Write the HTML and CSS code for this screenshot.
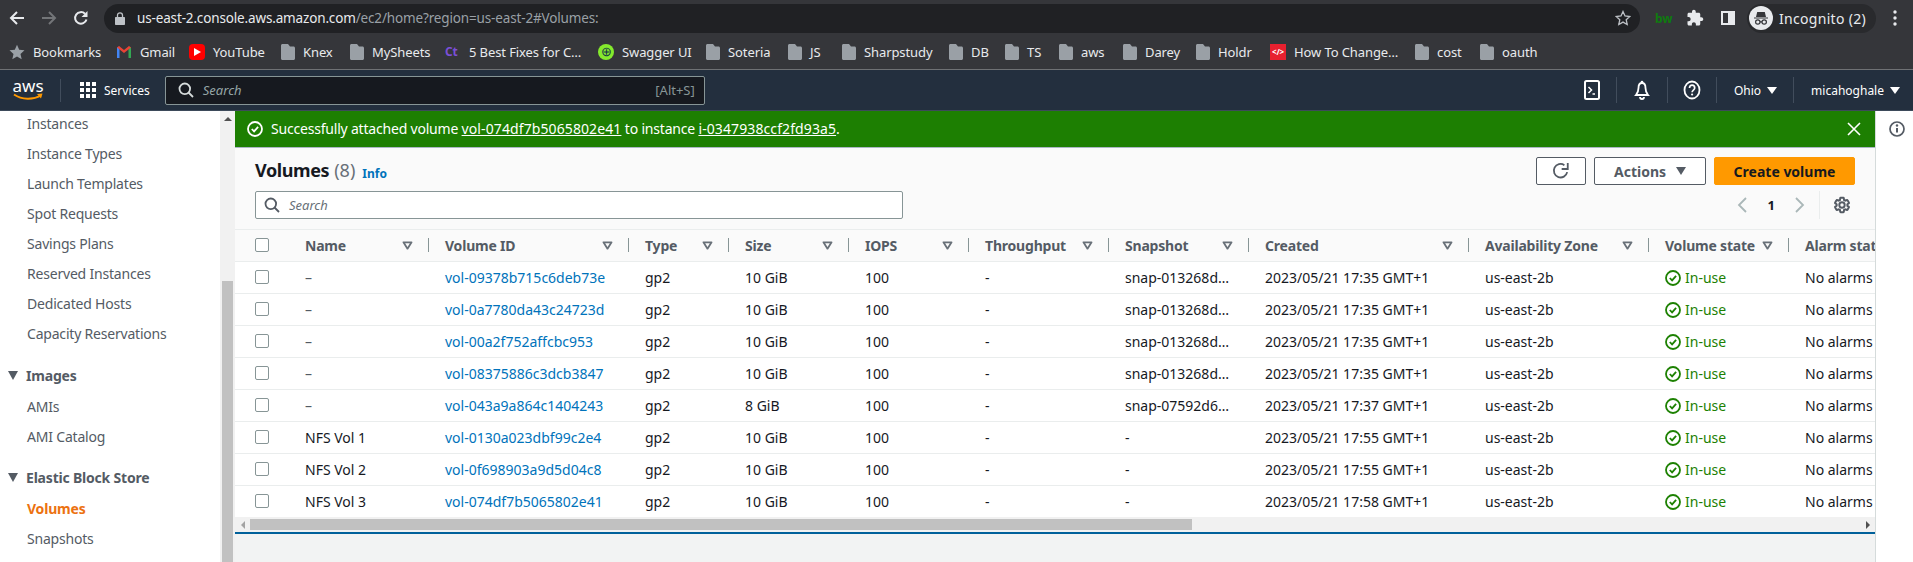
FILE: index.html
```html
<!DOCTYPE html>
<html lang="en">
<head>
  <meta charset="UTF-8">
  <title>Volumes | EC2 Management Console</title>
  <link rel="stylesheet" href="styles.css">
</head>
<body>
  <svg class="defs" width="0" height="0">
    <symbol id="folder" viewBox="0 0 14 16"><path d="M0 1.500C0 .7.7 0 1.500 0H7l2 2.500h3.500c.8 0 1.500.7 1.500 1.500v10.500c0 .8-.7 1.500-1.500 1.500h-11C.7 16 0 15.300 0 14.500z" fill="#9aa0a6"/></symbol>
    <symbol id="sort" viewBox="0 0 12 10"><path d="M1.500 1.500h9L6 8.500z" fill="none" stroke="#687078" stroke-width="2" stroke-linejoin="round"/></symbol>
    <symbol id="ok" viewBox="0 0 16 16"><circle cx="8" cy="8" r="7" fill="none" stroke="currentColor" stroke-width="1.800"/><path d="M4.800 8l2.300 2.400 4-4.600" fill="none" stroke="currentColor" stroke-width="1.800"/></symbol>
  </svg>

  <div class="browser-bar">
    <svg class="tb-icon back" width="16" height="16" viewBox="0 0 16 16"><path d="M15 8H2M8 2L2 8l6 6" fill="none" stroke="#e8eaed" stroke-width="2"/></svg>
    <svg class="tb-icon forward" width="16" height="16" viewBox="0 0 16 16"><path d="M1 8h13M8 2l6 6-6 6" fill="none" stroke="#737578" stroke-width="2"/></svg>
    <svg class="tb-icon reload" width="16" height="16" viewBox="0 0 16 16"><path d="M13.500 9.500A5.800 5.800 0 1 1 12 3.800" fill="none" stroke="#e8eaed" stroke-width="2"/><path d="M14.500 1v6h-6z" fill="#e8eaed"/></svg>
    <div class="omnibox">
      <svg class="lock" width="10" height="13" viewBox="0 0 10 13"><path d="M1 5h8c.6 0 1 .4 1 1v6c0 .6-.4 1-1 1H1c-.6 0-1-.4-1-1V6c0-.6.4-1 1-1z" fill="#bdc1c6"/><path d="M2.500 5V3.300a2.500 2.500 0 0 1 5 0V5" fill="none" stroke="#bdc1c6" stroke-width="1.300"/></svg>
      <span class="url">us-east-2.console.aws.amazon.com<span class="url-rest">/ec2/home?region=us-east-2#Volumes:</span></span>
      <svg class="star" width="16" height="16" viewBox="0 0 16 16"><path d="M8 1.500l2 4.500 4.800.5-3.600 3.200 1 4.800L8 12.100l-4.200 2.400 1-4.800L1.200 6.500 6 6z" fill="none" stroke="#bdc1c6" stroke-width="1.300"/></svg>
    </div>
    <span class="bw">bw</span>
    <svg class="puzzle" width="18" height="18" viewBox="0 0 24 24"><path d="M20.500 11H19V7c0-1.100-.9-2-2-2h-4V3.500C13 2.120 11.880 1 10.500 1S8 2.120 8 3.500V5H4c-1.100 0-1.990.9-1.990 2v3.800H3.500c1.490 0 2.700 1.210 2.700 2.700s-1.210 2.700-2.700 2.700H2V20c0 1.100.9 2 2 2h3.800v-1.500c0-1.490 1.210-2.700 2.700-2.700 1.490 0 2.700 1.210 2.700 2.700V22H17c1.100 0 2-.9 2-2v-4h1.500c1.380 0 2.500-1.120 2.500-2.500S21.880 11 20.500 11z" fill="#e8eaed"/></svg>
    <svg class="panel-toggle" width="14" height="14" viewBox="0 0 14 14"><path d="M0 0h14v14H0z" fill="#e8eaed"/><path d="M2 2h5v10H2z" fill="#35363a"/></svg>
    <div class="profile">
      <span class="avatar">
        <svg width="18" height="18" viewBox="0 0 18 18"><path d="M2 8.500h14v1H2zM4 8l1.200-5h7.600L14 8z" fill="#35363a"/><circle cx="5.800" cy="13" r="2.200" fill="none" stroke="#35363a" stroke-width="1.200"/><circle cx="12.200" cy="13" r="2.200" fill="none" stroke="#35363a" stroke-width="1.200"/><path d="M8 12.800h2" stroke="#35363a" stroke-width="1.200"/></svg>
      </span>
      <span class="profile-name">Incognito (2)</span>
    </div>
    <svg class="dots" width="4" height="16" viewBox="0 0 4 16"><circle cx="2" cy="2" r="1.700" fill="#e8eaed"/><circle cx="2" cy="8" r="1.700" fill="#e8eaed"/><circle cx="2" cy="14" r="1.700" fill="#e8eaed"/></svg>
  </div>

  <div class="bookmarks">
    <a class="bm"><svg class="bm-icon bm-wide" viewBox="0 0 16 16"><path d="M8 .8l2.200 5 5.300.5-4 3.600 1.200 5.300L8 12.400l-4.700 2.800 1.200-5.300-4-3.600 5.300-.5z" fill="#9aa0a6"/></svg>Bookmarks</a>
    <a class="bm"><svg class="bm-icon bm-wide" viewBox="0 0 16 16"><path d="M1 14V3.500l2.500-1V14z" fill="#4285f4"/><path d="M15 14V3.500l-2.500-1V14z" fill="#34a853"/><path d="M1 3.500L3 2l5 4 5-4 2 1.500-7 5.500z" fill="#ea4335"/></svg>Gmail</a>
    <a class="bm"><span class="yt"><svg width="8" height="8" viewBox="0 0 8 8"><path d="M1 0l7 4-7 4z" fill="#fff"/></svg></span>YouTube</a>
    <a class="bm"><svg class="bm-icon"><use href="#folder"/></svg>Knex</a>
    <a class="bm"><svg class="bm-icon"><use href="#folder"/></svg>MySheets</a>
    <a class="bm"><span class="ct">Ct</span>5 Best Fixes for C…</a>
    <a class="bm"><span class="swagger">⊕</span>Swagger UI</a>
    <a class="bm"><svg class="bm-icon"><use href="#folder"/></svg>Soteria</a>
    <a class="bm"><svg class="bm-icon"><use href="#folder"/></svg>JS</a>
    <a class="bm"><svg class="bm-icon"><use href="#folder"/></svg>Sharpstudy</a>
    <a class="bm"><svg class="bm-icon"><use href="#folder"/></svg>DB</a>
    <a class="bm"><svg class="bm-icon"><use href="#folder"/></svg>TS</a>
    <a class="bm"><svg class="bm-icon"><use href="#folder"/></svg>aws</a>
    <a class="bm"><svg class="bm-icon"><use href="#folder"/></svg>Darey</a>
    <a class="bm"><svg class="bm-icon"><use href="#folder"/></svg>Holdr</a>
    <a class="bm"><span class="code-icon">&lt;/&gt;</span>How To Change…</a>
    <a class="bm"><svg class="bm-icon"><use href="#folder"/></svg>cost</a>
    <a class="bm"><svg class="bm-icon"><use href="#folder"/></svg>oauth</a>
  </div>

  <nav class="topnav">
    <div class="logo">
      <span class="logo-text">aws</span>
      <svg width="30" height="9" viewBox="0 0 30 9"><path d="M1 1.500C9 7 20 7 28 2.500" fill="none" stroke="#ff9900" stroke-width="2"/><path d="M24 1l5.500-.5-1.500 5" fill="#ff9900"/></svg>
    </div>
    <svg class="grid-icon" width="16" height="16" viewBox="0 0 16 16"><path d="M0 0h4v4H0zM6 0h4v4H6zM12 0h4v4h-4zM0 6h4v4H0zM6 6h4v4H6zM12 6h4v4h-4zM0 12h4v4H0zM6 12h4v4H6zM12 12h4v4h-4z" fill="#fff"/></svg>
    <span class="services">Services</span>
    <div class="nav-search">
      <svg width="16" height="16" viewBox="0 0 16 16"><circle cx="6.800" cy="6.800" r="5.300" fill="none" stroke="#d5dbdb" stroke-width="1.800"/><path d="M10.500 10.500l4.500 4.500" stroke="#d5dbdb" stroke-width="1.800"/></svg>
      <span class="nav-placeholder">Search</span>
      <span class="nav-shortcut">[Alt+S]</span>
    </div>
    <div class="nav-right">
      <span class="nav-cell cell-shell">
        <svg width="16" height="20" viewBox="0 0 16 20"><rect x="1" y="1" width="14" height="18" rx="1.500" fill="none" stroke="#fff" stroke-width="2"/><path d="M4.500 7l3 3-3 3M8.500 14h2.500" fill="none" stroke="#fff" stroke-width="1.500"/></svg>
      </span>
      <span class="nav-cell cell-bell">
        <svg width="18" height="20" viewBox="0 0 18 20"><circle cx="9" cy="2" r="1.300" fill="#fff"/><path d="M9 3c2.500 0 3.500 2.200 3.500 5 0 2.800.8 5 2.500 7H3c1.700-2 2.500-4.200 2.500-7 0-2.800 1-5 3.500-5zM7 17a2 2 0 0 0 4 0" fill="none" stroke="#fff" stroke-width="1.800"/></svg>
      </span>
      <span class="nav-cell cell-help">
        <svg width="18" height="20" viewBox="0 0 18 20"><ellipse cx="9" cy="10" rx="7.500" ry="8.500" fill="none" stroke="#fff" stroke-width="1.800"/><path d="M6.500 8c0-1.800 1-2.800 2.600-2.800S11.700 6.300 11.700 8c0 2-2.600 2.200-2.600 4.300" fill="none" stroke="#fff" stroke-width="1.700"/><circle cx="9.100" cy="14.500" r="1.100" fill="#fff"/></svg>
      </span>
      <span class="nav-cell cell-region">Ohio<i class="caret"></i></span>
      <span class="nav-cell cell-user">micahoghale<i class="caret"></i></span>
    </div>
  </nav>

  <div class="layout">
    <aside class="sidebar">
      <ul class="side-list">
        <li>Instances</li>
        <li>Instance Types</li>
        <li>Launch Templates</li>
        <li>Spot Requests</li>
        <li>Savings Plans</li>
        <li>Reserved Instances</li>
        <li>Dedicated Hosts</li>
        <li>Capacity Reservations</li>
        <li class="side-group first-group"><i class="side-caret"></i>Images</li>
        <li>AMIs</li>
        <li>AMI Catalog</li>
        <li class="side-group"><i class="side-caret"></i>Elastic Block Store</li>
        <li class="active">Volumes</li>
        <li>Snapshots</li>
      </ul>
    </aside>
    <div class="side-scroll">
      <i class="arrow-up"></i>
      <div class="side-thumb"></div>
    </div>

    <main class="main">
      <div class="flash">
        <svg class="flash-ok"><use href="#ok"/></svg>
        <span class="flash-text">Successfully attached volume <u>vol-074df7b5065802e41</u> to instance <u>i-0347938ccf2fd93a5</u>.</span>
        <svg class="flash-close" width="14" height="14" viewBox="0 0 14 14"><path d="M1 1l12 12M13 1L1 13" stroke="#fff" stroke-width="1.600"/></svg>
      </div>

      <div class="panel-head">
        <div class="head-left">
          <div class="title-row">
            <h1>Volumes</h1><span class="count">(8)</span><a class="info">Info</a>
          </div>
          <div class="filter">
            <svg width="16" height="16" viewBox="0 0 16 16"><circle cx="6.800" cy="6.800" r="5.300" fill="none" stroke="#545b64" stroke-width="1.800"/><path d="M10.500 10.500l4.500 4.500" stroke="#545b64" stroke-width="1.800"/></svg>
            <span>Search</span>
          </div>
        </div>
        <div class="head-right">
          <div class="buttons">
            <button class="btn btn-refresh">
              <svg width="18" height="18" viewBox="0 0 16 16"><path d="M13.500 9A6 6 0 1 1 11 2.800" fill="none" stroke="#545b64" stroke-width="1.600"/><path d="M14 .8v5.400H8.600" fill="none" stroke="#545b64" stroke-width="1.600"/></svg>
            </button>
            <button class="btn btn-actions">Actions<i class="btn-caret"></i></button>
            <button class="btn btn-create">Create volume</button>
          </div>
          <div class="pager">
            <svg width="10" height="16" viewBox="0 0 10 16"><path d="M9 1L2 8l7 7" fill="none" stroke="#aab7b8" stroke-width="1.800"/></svg>
            <b class="page-no">1</b>
            <svg width="10" height="16" viewBox="0 0 10 16"><path d="M1 1l7 7-7 7" fill="none" stroke="#aab7b8" stroke-width="1.800"/></svg>
            <span class="pager-cell">
              <svg width="18" height="18" viewBox="0 0 24 24"><path d="M19.140 12.940c.04-.3.06-.61.06-.94 0-.32-.02-.64-.07-.94l2.030-1.580c.18-.14.23-.41.120-.61l-1.920-3.320c-.12-.22-.37-.29-.59-.22l-2.390.96c-.5-.38-1.030-.7-1.620-.94l-.36-2.540c-.04-.24-.24-.41-.48-.41h-3.840c-.24 0-.43.17-.47.41l-.36 2.540c-.59.24-1.130.57-1.620.94l-2.390-.96c-.22-.08-.47 0-.59.22L2.740 8.870c-.12.21-.08.47.12.61l2.030 1.580c-.05.3-.09.63-.09.94s.02.64.07.94l-2.030 1.580c-.18.14-.23.41-.12.61l1.920 3.320c.12.22.37.29.59.22l2.390-.96c.5.38 1.030.7 1.620.94l.36 2.540c.05.24.24.41.48.41h3.840c.24 0 .44-.17.47-.41l.36-2.540c.59-.24 1.130-.56 1.620-.94l2.390.96c.22.08.47 0 .59-.22l1.920-3.320c.12-.22.07-.47-.12-.61l-2.010-1.580zM12 15.600c-1.980 0-3.600-1.620-3.600-3.600s1.620-3.600 3.600-3.600 3.600 1.620 3.600 3.600-1.620 3.600-3.600 3.600z" fill="none" stroke="#545b64" stroke-width="2.600"/></svg>
            </span>
          </div>
        </div>
      </div>

      <div class="table-wrap">
        <table class="vol-table">
          <colgroup>
            <col class="c-check"><col class="c-140"><col class="c-200"><col class="c-100"><col class="c-120"><col class="c-120"><col class="c-140"><col class="c-140"><col class="c-220"><col class="c-180"><col class="c-140"><col class="c-200">
          </colgroup>
          <thead>
            <tr>
              <th class="check-cell"><span class="check"></span></th>
              <th><div class="th-in">Name<svg class="sort"><use href="#sort"/></svg></div></th>
              <th><div class="th-in">Volume ID<svg class="sort"><use href="#sort"/></svg></div></th>
              <th><div class="th-in">Type<svg class="sort"><use href="#sort"/></svg></div></th>
              <th><div class="th-in">Size<svg class="sort"><use href="#sort"/></svg></div></th>
              <th><div class="th-in">IOPS<svg class="sort"><use href="#sort"/></svg></div></th>
              <th><div class="th-in">Throughput<svg class="sort"><use href="#sort"/></svg></div></th>
              <th><div class="th-in">Snapshot<svg class="sort"><use href="#sort"/></svg></div></th>
              <th><div class="th-in">Created<svg class="sort"><use href="#sort"/></svg></div></th>
              <th><div class="th-in">Availability Zone<svg class="sort"><use href="#sort"/></svg></div></th>
              <th><div class="th-in">Volume state<svg class="sort"><use href="#sort"/></svg></div></th>
              <th><div class="th-in">Alarm state<svg class="sort"><use href="#sort"/></svg></div></th>
            </tr>
          </thead>
          <tbody>
            <tr><td class="check-cell"><span class="check"></span></td><td class="muted">–</td><td><a>vol-09378b715c6deb73e</a></td><td>gp2</td><td>10 GiB</td><td>100</td><td>-</td><td>snap-013268d…</td><td>2023/05/21 17:35 GMT+1</td><td>us-east-2b</td><td class="state"><svg class="state-ok"><use href="#ok"/></svg>In-use</td><td>No alarms</td></tr>
            <tr><td class="check-cell"><span class="check"></span></td><td class="muted">–</td><td><a>vol-0a7780da43c24723d</a></td><td>gp2</td><td>10 GiB</td><td>100</td><td>-</td><td>snap-013268d…</td><td>2023/05/21 17:35 GMT+1</td><td>us-east-2b</td><td class="state"><svg class="state-ok"><use href="#ok"/></svg>In-use</td><td>No alarms</td></tr>
            <tr><td class="check-cell"><span class="check"></span></td><td class="muted">–</td><td><a>vol-00a2f752affcbc953</a></td><td>gp2</td><td>10 GiB</td><td>100</td><td>-</td><td>snap-013268d…</td><td>2023/05/21 17:35 GMT+1</td><td>us-east-2b</td><td class="state"><svg class="state-ok"><use href="#ok"/></svg>In-use</td><td>No alarms</td></tr>
            <tr><td class="check-cell"><span class="check"></span></td><td class="muted">–</td><td><a>vol-08375886c3dcb3847</a></td><td>gp2</td><td>10 GiB</td><td>100</td><td>-</td><td>snap-013268d…</td><td>2023/05/21 17:35 GMT+1</td><td>us-east-2b</td><td class="state"><svg class="state-ok"><use href="#ok"/></svg>In-use</td><td>No alarms</td></tr>
            <tr><td class="check-cell"><span class="check"></span></td><td class="muted">–</td><td><a>vol-043a9a864c1404243</a></td><td>gp2</td><td>8 GiB</td><td>100</td><td>-</td><td>snap-07592d6…</td><td>2023/05/21 17:37 GMT+1</td><td>us-east-2b</td><td class="state"><svg class="state-ok"><use href="#ok"/></svg>In-use</td><td>No alarms</td></tr>
            <tr><td class="check-cell"><span class="check"></span></td><td>NFS Vol 1</td><td><a>vol-0130a023dbf99c2e4</a></td><td>gp2</td><td>10 GiB</td><td>100</td><td>-</td><td>-</td><td>2023/05/21 17:55 GMT+1</td><td>us-east-2b</td><td class="state"><svg class="state-ok"><use href="#ok"/></svg>In-use</td><td>No alarms</td></tr>
            <tr><td class="check-cell"><span class="check"></span></td><td>NFS Vol 2</td><td><a>vol-0f698903a9d5d04c8</a></td><td>gp2</td><td>10 GiB</td><td>100</td><td>-</td><td>-</td><td>2023/05/21 17:55 GMT+1</td><td>us-east-2b</td><td class="state"><svg class="state-ok"><use href="#ok"/></svg>In-use</td><td>No alarms</td></tr>
            <tr><td class="check-cell"><span class="check"></span></td><td>NFS Vol 3</td><td><a>vol-074df7b5065802e41</a></td><td>gp2</td><td>10 GiB</td><td>100</td><td>-</td><td>-</td><td>2023/05/21 17:58 GMT+1</td><td>us-east-2b</td><td class="state"><svg class="state-ok"><use href="#ok"/></svg>In-use</td><td>No alarms</td></tr>
          </tbody>
        </table>
      </div>

      <div class="h-scroll">
        <span class="h-arrow"><i class="arrow-left"></i></span>
        <div class="h-thumb"></div>
        <span class="h-arrow h-arrow-end"><i class="arrow-right"></i></span>
      </div>
      <div class="main-foot"></div>
    </main>

    <aside class="rail">
      <svg width="16" height="16" viewBox="0 0 16 16"><circle cx="8" cy="8" r="7" fill="none" stroke="#545b64" stroke-width="1.700"/><path d="M8 7v4.500" stroke="#545b64" stroke-width="2"/><circle cx="8" cy="4.500" r="1.200" fill="#545b64"/></svg>
    </aside>
  </div>
</body>
</html>
```
FILE: styles.css
```css
* {
  box-sizing: border-box;
}

html,
body {
  margin: 0;
  height: 562px;
  overflow: hidden;
}

body {
  font-family: "Noto Sans", "Open Sans", sans-serif;
  font-size: 14px;
  color: #16191f;
  background-color: #fff;
}

.defs {
  display: block;
  height: 0;
}

/* browser chrome */
.browser-bar {
  display: flex;
  align-items: center;
  height: 35px;
  padding-top: 1px;
  background-color: #35363a;
  color: #e8eaed;
}

.tb-icon {
  flex: none;
}

.back {
  margin-left: 9px;
}

.forward {
  margin-left: 16px;
}

.reload {
  margin-left: 16px;
}

.omnibox {
  display: flex;
  align-items: center;
  flex: none;
  width: 1536px;
  height: 29px;
  margin-left: 15px;
  padding: 0 9px 0 11px;
  border-radius: 15px;
  background-color: #202124;
}

.url {
  margin-left: 12px;
  font-size: 13.5px;
  letter-spacing: -.15px;
  color: #e8eaed;
  white-space: nowrap;
}

.url-rest {
  color: #9aa0a6;
}

.star {
  margin-left: auto;
}

.bw {
  width: 16px;
  margin-left: 15px;
  font-size: 12px;
  font-weight: 700;
  color: #0f7a0f;
}

.puzzle {
  margin-left: 15px;
}

.panel-toggle {
  margin-left: 17px;
}

.profile {
  display: flex;
  align-items: center;
  gap: 6px;
  width: 129px;
  height: 29px;
  margin-left: 12px;
  padding-left: 2px;
  border-radius: 15px;
  background-color: #292a2d;
  font-size: 14px;
  white-space: nowrap;
}

.profile-name {
  letter-spacing: .3px;
}

.avatar {
  display: flex;
  align-items: center;
  justify-content: center;
  width: 24px;
  height: 24px;
  border-radius: 50%;
  background-color: #e8eaed;
}

.dots {
  margin-left: 17px;
}

.bookmarks {
  display: grid;
  grid-template-columns: 107px 73px 92px 69px 95px 153px 108px 82px 54px 107px 56px 54px 64px 73px 74px 145px 65px 80px;
  align-items: center;
  height: 35px;
  padding: 0 0 1px 9px;
  border-bottom: 1px solid #6f7174;
  background-color: #35363a;
  color: #e8eaed;
  font-size: 13px;
}

.bm {
  display: flex;
  align-items: center;
  gap: 8px;
  white-space: nowrap;
  letter-spacing: -.1px;
}

.bm-icon {
  width: 14px;
  height: 16px;
  flex: none;
}

.bm-wide {
  width: 16px;
}

.yt {
  display: flex;
  align-items: center;
  justify-content: center;
  width: 16px;
  height: 16px;
  border-radius: 4px;
  background-color: #f00;
}

.ct {
  width: 16px;
  font-size: 12px;
  font-weight: 700;
  color: #7b4fd6;
}

.swagger {
  display: flex;
  align-items: center;
  justify-content: center;
  width: 16px;
  height: 16px;
  border-radius: 50%;
  background-color: #85ea2d;
  color: #173647;
  font-size: 13px;
  line-height: 1;
}

.code-icon {
  display: flex;
  align-items: center;
  justify-content: center;
  width: 16px;
  height: 16px;
  background-color: #e8202f;
  color: #fff;
  font-size: 8px;
  font-weight: 700;
}

/* console nav */
.topnav {
  display: flex;
  align-items: center;
  height: 41px;
  border-bottom: 1px solid #3d4a5a;
  background-color: #232f3e;
  color: #fff;
}

.logo {
  display: flex;
  flex-direction: column;
  align-items: center;
  width: 48px;
  margin-left: 13px;
  padding-right: 17px;
  border-right: 1px solid #414d5c;
  line-height: 14px;
}

.logo-text {
  font-size: 17px;
}

.grid-icon {
  margin-left: 19px;
}

.services {
  margin-left: 8px;
  font-size: 12px;
}

.nav-search {
  display: flex;
  align-items: center;
  width: 540px;
  height: 29px;
  margin-left: 15px;
  padding: 0 9px 0 12px;
  border: 1px solid #879596;
  border-radius: 2px;
  background-color: #16191f;
  font-size: 13px;
}

.nav-placeholder {
  margin-left: 9px;
  font-style: italic;
  color: #95a5a6;
}

.nav-shortcut {
  margin-left: auto;
  color: #879596;
}

.nav-right {
  display: flex;
  align-items: center;
  height: 26px;
  margin-left: auto;
  font-size: 12px;
}

.nav-cell {
  display: flex;
  align-items: center;
  height: 100%;
  border-right: 1px solid #414d5c;
}

.cell-shell {
  padding: 0 16px 0 0;
}

.cell-bell {
  padding: 0 16px;
}

.cell-help {
  padding: 0 15px;
}

.cell-region {
  padding: 0 16px 0 17px;
}

.cell-user {
  padding: 0 13px 0 17px;
  border-right: 0;
}

.caret {
  display: inline-block;
  width: 0;
  height: 0;
  margin-left: 6px;
  border-style: solid;
  border-width: 7px 5px 0;
  border-color: #fff transparent transparent;
}

/* page body */
.layout {
  display: flex;
  height: 451px;
}

.sidebar {
  flex: none;
  width: 220px;
  overflow: hidden;
  background-color: #fff;
}

.side-list {
  margin: -3px 0 0;
  padding: 0;
  list-style: none;
  color: #545b64;
  font-size: 14px;
  letter-spacing: -.2px;
}

.side-list li {
  display: flex;
  align-items: center;
  height: 30px;
  padding-left: 27px;
  white-space: nowrap;
}

.side-list .side-group {
  height: 31px;
  margin-top: 11px;
  padding-left: 8px;
  font-weight: 700;
}

.side-list .first-group {
  margin-top: 12px;
}

.side-caret {
  width: 0;
  height: 0;
  margin-right: 8px;
  border-style: solid;
  border-width: 9px 5px 0;
  border-color: #545b64 transparent transparent;
}

.side-list .active {
  height: 30px;
  color: #ec7211;
  font-weight: 700;
}

.side-scroll {
  display: flex;
  flex-direction: column;
  flex: none;
  width: 15px;
  background-color: #f1f1f1;
}

.arrow-up {
  width: 0;
  height: 0;
  margin: 6px 0 0 4px;
  border-style: solid;
  border-width: 0 4px 4px;
  border-color: transparent transparent #505050;
}

.side-thumb {
  flex: none;
  width: 11px;
  height: 281px;
  margin: 160px 0 0 2px;
  background-color: #c1c1c1;
}

.main {
  display: flex;
  flex-direction: column;
  flex: none;
  width: 1640px;
  background-color: #f2f3f3;
}

.flash {
  display: flex;
  align-items: center;
  flex: none;
  height: 37px;
  padding: 0 14px 1px 12px;
  border-bottom: 1px solid #aab7c4;
  background-color: #1d7f02;
  color: #fff;
}

.flash-ok {
  width: 16px;
  height: 16px;
  color: #fff;
}

.flash-text {
  margin-left: 8px;
  font-size: 14px;
  letter-spacing: -.2px;
}

.flash-text u {
  letter-spacing: .1px;
}

.flash-close {
  margin-left: auto;
}

.panel-head {
  display: flex;
  justify-content: space-between;
  flex: none;
  height: 81px;
  padding: 9px 20px 10px;
  background-color: #fafafa;
}

.head-left,
.head-right {
  display: flex;
  flex-direction: column;
  gap: 6px;
}

.title-row {
  display: flex;
  align-items: center;
  height: 28px;
  padding-bottom: 2px;
}

h1 {
  margin: 0;
  font-size: 18px;
  font-weight: 700;
  letter-spacing: -.4px;
}

.count {
  margin-left: 5px;
  font-size: 18px;
  color: #687078;
}

.info {
  margin: 6px 0 0 7px;
  font-size: 12px;
  font-weight: 700;
  color: #0073bb;
}

.filter {
  display: flex;
  align-items: center;
  gap: 9px;
  width: 648px;
  height: 28px;
  padding-left: 8px;
  border: 1px solid #879596;
  border-radius: 2px;
  background-color: #fff;
  font-style: italic;
  font-size: 13px;
  color: #687078;
}

.buttons {
  display: flex;
  gap: 8px;
}

.btn {
  display: flex;
  align-items: center;
  justify-content: center;
  height: 28px;
  padding: 0;
  border: 1px solid #545b64;
  border-radius: 2px;
  background-color: #fff;
  font-family: inherit;
  font-size: 14px;
  font-weight: 700;
  color: #545b64;
}

.btn-refresh {
  width: 50px;
}

.btn-actions {
  gap: 10px;
  width: 112px;
}

.btn-caret {
  width: 0;
  height: 0;
  border-style: solid;
  border-width: 8px 5px 0;
  border-color: #545b64 transparent transparent;
}

.btn-create {
  width: 141px;
  border-color: #ff9900;
  background-color: #ff9900;
  color: #16191f;
}

.pager {
  display: flex;
  align-items: center;
  align-self: flex-end;
  height: 28px;
  padding-right: 4px;
}

.page-no {
  margin: 0 20px 0 21px;
  font-size: 13px;
}

.pager-cell {
  display: flex;
  align-items: center;
  height: 28px;
  margin-left: 14px;
  padding-left: 13px;
  border-left: 1px solid #eaeded;
}

.table-wrap {
  flex: none;
  height: 288px;
  overflow: hidden;
  border-top: 1px solid #eaeded;
  background-color: #fff;
}

.vol-table {
  width: 1754px;
  border-collapse: collapse;
  table-layout: fixed;
}

.c-check {
  width: 54px;
}

.c-100 {
  width: 100px;
}

.c-120 {
  width: 120px;
}

.c-140 {
  width: 140px;
}

.c-180 {
  width: 180px;
}

.c-200 {
  width: 200px;
}

.c-220 {
  width: 220px;
}

.vol-table th {
  height: 31px;
  padding: 0;
  border-bottom: 1px solid #eaeded;
  background-color: #fafafa;
  color: #545b64;
  font-size: 14px;
  font-weight: 700;
  text-align: left;
  letter-spacing: -.2px;
}

.th-in {
  display: flex;
  align-items: center;
  justify-content: space-between;
  height: 14px;
  padding: 0 15px 0 16px;
  border-right: 1px solid #879596;
  white-space: nowrap;
}

.sort {
  width: 11px;
  height: 9px;
  flex: none;
}

.vol-table td {
  height: 32px;
  padding: 0 0 0 16px;
  border-bottom: 1px solid #eaeded;
  white-space: nowrap;
  overflow: hidden;
}

.vol-table .check-cell {
  padding-left: 20px;
}

.check {
  display: block;
  width: 14px;
  height: 14px;
  border: 1px solid #879596;
  border-radius: 2px;
  background-color: #fff;
}

.vol-table a {
  color: #0073bb;
}

.muted {
  color: #545b64;
}

.vol-table .state {
  color: #1d8102;
}

.state-ok {
  width: 16px;
  height: 16px;
  margin-right: 4px;
  vertical-align: -3px;
}

.h-scroll {
  display: flex;
  align-items: center;
  flex: none;
  height: 15px;
  background-color: #f1f1f1;
}

.h-arrow {
  display: flex;
  align-items: center;
  justify-content: center;
  flex: none;
  width: 15px;
  height: 15px;
}

.h-arrow-end {
  margin-left: auto;
}

.arrow-left,
.arrow-right {
  width: 0;
  height: 0;
  border-style: solid;
  border-width: 4px 4px 4px 0;
  border-color: transparent #a3a3a3 transparent transparent;
}

.arrow-right {
  border-width: 4px 0 4px 4px;
  border-color: transparent transparent transparent #505050;
}

.h-thumb {
  width: 942px;
  height: 11px;
  background-color: #c1c1c1;
}

.main-foot {
  flex: 1;
  border-top: 2px solid #00609a;
}

.rail {
  flex: 1;
  padding: 10px 0 0 13px;
  border-left: 1px solid #d5dbdb;
  background-color: #fff;
}
```
